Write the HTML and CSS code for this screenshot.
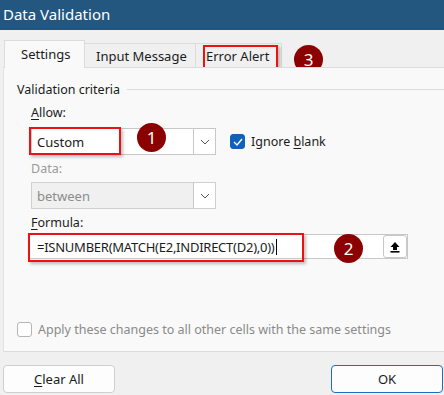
FILE: index.html
```html
<!DOCTYPE html>
<html lang="en">
<head>
    <meta charset="UTF-8">
    <meta name="viewport" content="width=device-width, initial-scale=1.0">
    <title>Data Validation</title>
    <link rel="stylesheet" href="styles.css">
</head>
<body>
    <div class="titlebar">Data Validation</div>

    <div class="tabs">
        <div class="tab active">Settings</div>
        <div class="tab">Input Message</div>
        <div class="tab">Error Alert<span class="mark mark-tab"></span></div>
        <span class="badge badge-3">3</span>
    </div>

    <div class="panel">
        <div class="legend">
            <span>Validation criteria</span>
            <span class="legend-line"></span>
        </div>

        <div class="group">
            <div class="label"><u>A</u>llow:</div>
            <div class="row">
                <div class="select">
                    <span class="select-text">Custom</span>
                    <span class="drop"><svg width="10" height="6" viewBox="0 0 10 6"><path d="M1 1l4 4 4-4" fill="none" stroke="#555" stroke-width="1"/></svg></span>
                    <span class="mark mark-custom"></span>
                    <span class="badge badge-1">1</span>
                </div>
                <label class="check">
                    <span class="box checked"><svg width="10" height="8" viewBox="0 0 10 8"><path d="M1 4l3 3 5-6" fill="none" stroke="#fff" stroke-width="1.4"/></svg></span>
                    <span>Ignore <u>b</u>lank</span>
                </label>
            </div>

            <div class="label muted">Data:</div>
            <div class="select disabled">
                <span class="select-text">between</span>
                <span class="drop"><svg width="10" height="6" viewBox="0 0 10 6"><path d="M1 1l4 4 4-4" fill="none" stroke="#555" stroke-width="1"/></svg></span>
            </div>

            <div class="label formula-label"><u>F</u>ormula:</div>
            <div class="formula">
                <span class="formula-text">=ISNUMBER(MATCH(E2,INDIRECT(D2),0))<span class="caret"></span></span>
                <span class="collapse"><svg width="12" height="12" viewBox="0 0 12 12"><path d="M6 1L1.5 6H4v3h4V6h2.5z" fill="#000"/><rect x="1.5" y="10" width="9" height="1.6" fill="#000"/></svg></span>
                <span class="mark mark-formula"></span>
                <span class="badge badge-2">2</span>
            </div>
        </div>

        <label class="check apply">
            <span class="box"></span>
            <span>Apply these changes to all other cells with the same settings</span>
        </label>
    </div>

    <div class="footer">
        <button class="btn"><u>C</u>lear All</button>
        <button class="btn primary">OK</button>
    </div>
</body>
</html>
```

FILE: styles.css
```css
body {
    margin: 0;
    width: 444px;
    height: 395px;
    overflow: hidden;
    background: #f0f0f0;
    font-family: "Noto Sans", "Open Sans", sans-serif;
    font-size: 12.5px;
    color: #1b1b1b;
}
u {
    text-decoration-thickness: 1px;
    text-underline-offset: 2px;
}
.titlebar {
    height: 30px;
    line-height: 28px;
    background: #23577f;
    color: #fff;
    font-size: 15px;
    padding-left: 3px;
}
.tabs {
    position: relative;
    display: flex;
    align-items: flex-end;
    height: 27px;
    margin-top: 10px;
    padding-left: 4px;
}
.tab {
    position: relative;
    height: 24px;
    line-height: 24px;
    padding: 0 13px;
    background: #f0f0f0;
    border: 1px solid #dcdcdc;
    border-bottom: none;
    border-left: none;
    box-sizing: border-box;
    white-space: nowrap;
    font-size: 13px;
}
.tab.active {
    height: 28px;
    line-height: 26px;
    background: #f9f9f9;
    border-left: 1px solid #dcdcdc;
    width: 81px;
    padding: 0 0 0 16px;
    margin-bottom: -1px;
    z-index: 1;
}
.tab:nth-child(2) {
    width: 111px;
    padding-left: 11px;
}
.tab:nth-child(3) {
    width: 86px;
    padding-left: 10px;
}
.panel {
    position: relative;
    margin-left: 3px;
    height: 285px;
    background: #f9f9f9;
    border-top: 1px solid #dcdcdc;
    border-bottom: 1px solid #dcdcdc;
    border-left: 1px solid #e2e2e2;
    box-sizing: border-box;
    padding: 12px 0 0 13px;
}
.legend {
    display: flex;
    align-items: center;
    gap: 7px;
    height: 18px;
}
.legend-line {
    flex: 1;
    border-top: 1px solid #dcdcdc;
    margin-top: 1px;
}
.group {
    padding-left: 14px;
    padding-top: 6px;
}
.label {
    height: 18px;
    line-height: 18px;
}
.label.muted {
    color: #9a9a9a;
}
.row {
    display: flex;
    align-items: center;
    gap: 14px;
    margin-top: 6px;
}
.select {
    position: relative;
    width: 185px;
    height: 27px;
    background: #fff;
    border: 1px solid #c8c8c8;
    box-sizing: border-box;
    display: flex;
    align-items: center;
    justify-content: space-between;
    padding-left: 5px;
    font-size: 13px;
}
.select.disabled {
    background: #f0f0f0;
    color: #8c8c8c;
    margin-top: 4px;
    border-color: #d0d0d0;
}
.group > .label.muted {
    margin-top: 5px;
}
.drop {
    width: 21px;
    height: 25px;
    border-left: 1px solid #c8c8c8;
    background: #fff;
    display: flex;
    align-items: center;
    justify-content: center;
}
.check {
    display: flex;
    align-items: center;
    gap: 6px;
    white-space: nowrap;
}
.box {
    width: 15px;
    height: 15px;
    border: 1px solid #9a9a9a;
    border-radius: 3px;
    box-sizing: border-box;
    background: #fff;
    display: flex;
    align-items: center;
    justify-content: center;
}
.box.checked {
    background: #0f62b8;
    border-color: #0f62b8;
}
.formula-label {
    margin-top: 5px;
}
.formula {
    position: relative;
    width: 380px;
    height: 25px;
    margin-top: 2px;
    margin-left: -3px;
    background: #fff;
    border: 1px solid #c8c8c8;
    box-sizing: border-box;
    display: flex;
    align-items: center;
    justify-content: space-between;
    padding-left: 8px;
}
.formula-text {
    font-size: 13px;
    letter-spacing: -0.25px;
}
.caret {
    display: inline-block;
    width: 1px;
    height: 16px;
    background: #000;
    vertical-align: -3px;
    margin-left: 1px;
}
.collapse {
    width: 24px;
    height: 23px;
    border: 1px solid #c8c8c8;
    border-radius: 3px;
    box-sizing: border-box;
    background: #fff;
    display: flex;
    align-items: center;
    justify-content: center;
}
.apply {
    margin-top: 62px;
    color: #8a8a8a;
}
.apply .box {
    border-color: #b5b5b5;
}
.footer {
    display: flex;
    justify-content: space-between;
    padding: 13px 1px 0 3px;
}
.btn {
    width: 112px;
    height: 28px;
    background: #fdfdfd;
    border: 1px solid #cfcfcf;
    border-radius: 4px;
    font-family: inherit;
    font-size: 13px;
    color: #1b1b1b;
}
.btn.primary {
    border-color: #1a6fc4;
}
.mark {
    position: absolute;
    border: 2px solid #ee1111;
    box-shadow: 2px 2px 3px rgba(0, 0, 0, 0.25);
    pointer-events: none;
}
.mark-tab {
    left: 7px;
    top: 1px;
    width: 71px;
    height: 22px;
}
.mark-custom {
    left: -3px;
    top: -2px;
    width: 88px;
    height: 24px;
}
.mark-formula {
    left: -1px;
    top: -2px;
    width: 272px;
    height: 25px;
}
.badge {
    position: absolute;
    width: 29px;
    height: 29px;
    border-radius: 50%;
    background: #8b0000;
    color: #fff;
    font-size: 17px;
    line-height: 29px;
    text-align: center;
}
.badge-3 {
    left: 294px;
    top: 5px;
}
.badge-1 {
    left: 105px;
    top: -6px;
}
.badge-2 {
    left: 305px;
    top: -1px;
}
```
